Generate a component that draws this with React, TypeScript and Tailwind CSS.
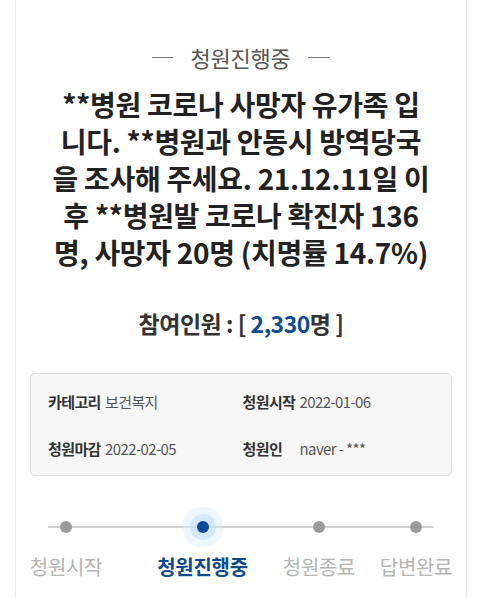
import React from 'react';

const font = { fontFamily: '"Noto Sans CJK KR", "Noto Sans", sans-serif' };

const steps = [
  { label: '청원시작', cls: 'w-[72px]' },
  { label: '청원진행중', cls: 'w-[92px] ml-[55px]', active: true },
  { label: '청원종료', cls: 'w-[72px] ml-[35px]' },
  { label: '답변완료', cls: 'w-[72px] ml-[25px]' },
];

const InfoItem: React.FC<{ label: string; value: string }> = ({ label, value }) => (
  <div className="flex items-center h-[20px] text-[15px] tracking-[-0.6px] leading-[20px]">
    <span className="w-[57px] shrink-0 font-bold text-[#333]">{label}</span>
    <span className="text-[#555]">{value}</span>
  </div>
);

export default function App() {
  return (
    <div className="min-h-[598px] bg-white pl-[15px] pr-[13px]" style={font}>
      <div className="border-x border-[#e8e8e8] min-h-[598px] pt-[43px] px-[14px]">
        {/* status */}
        <div className="flex items-center justify-center h-[28px] gap-[17px]">
          <span className="inline-block w-[21px] h-px bg-[#777]" />
          <span className="text-[22px] leading-[28px] text-[#555] tracking-[-0.2px]">청원진행중</span>
          <span className="inline-block w-[22px] h-px bg-[#777]" />
        </div>

        {/* title */}
        <h1 className="mt-[15px] -mx-[10px] text-center text-[28px] leading-[37px] font-bold text-[#222] tracking-[-0.3px]">
          **병원 코로나 사망자 유가족 입<br />
          니다. **병원과 안동시 방역당국<br />
          을 조사해 주세요. 21.12.11일 이<br />
          후 **병원발 코로나 확진자 136<br />
          명, 사망자 20명 (치명률 14.7%)
        </h1>

        {/* participants */}
        <div className="mt-[37px] text-center text-[23px] leading-[30px] font-bold text-[#333] tracking-[-0.5px]">
          참여인원 : [ <span className="text-[#0d4c94]">2,330</span>명 ]
        </div>

        {/* info box */}
        <div className="mt-[35px] h-[103px] rounded-[5px] border border-[#dcdcdc] bg-[#f7f7f7] pl-[17px] pr-[14px] pt-[18px]">
          <div className="grid grid-cols-2">
            <InfoItem label="카테고리" value="보건복지" />
            <InfoItem label="청원시작" value="2022-01-06" />
          </div>
          <div className="grid grid-cols-2 mt-[27px]">
            <InfoItem label="청원마감" value="2022-02-05" />
            <InfoItem label="청원인" value="naver - ***" />
          </div>
        </div>

        {/* progress */}
        <div className="relative mt-[39px]">
          <div className="absolute left-[18px] top-[11px] w-[386px] h-[2px] bg-[#d0d0d0]" />
          <div className="relative flex">
            {steps.map((s) => (
              <div key={s.label} className={`flex flex-col items-center ${s.cls}`}>
                <div className="h-[24px] flex items-center justify-center">
                  {s.active ? (
                    <span className="w-[12px] h-[12px] rounded-full bg-[#0b4a9a] shadow-[0_0_0_7px_rgba(190,222,250,0.55),0_0_0_14px_rgba(220,238,253,0.45)]" />
                  ) : (
                    <span className="w-[12px] h-[12px] rounded-full bg-[#9b9b9b]" />
                  )}
                </div>
                <div
                  className={`mt-[14px] whitespace-nowrap text-[20px] leading-[28px] tracking-[-0.3px] ${
                    s.active ? 'font-bold text-[#0d4a90]' : 'text-[#b5b5b5]'
                  }`}
                >
                  {s.label}
                </div>
              </div>
            ))}
          </div>
        </div>
      </div>
    </div>
  );
}
